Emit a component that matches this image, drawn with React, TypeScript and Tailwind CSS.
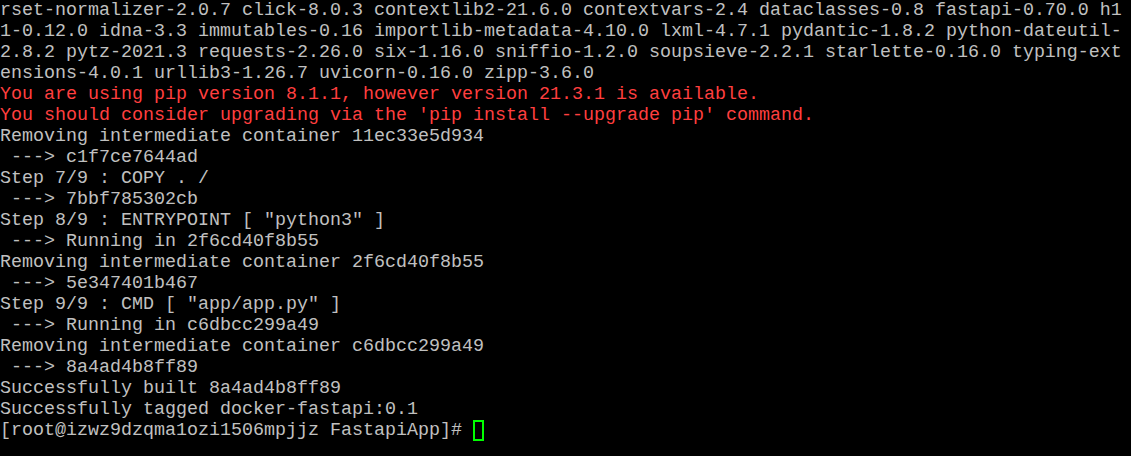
import React from 'react';

// Terminal output lines; red ones are the pip warnings
const lines: { text: string; red?: boolean }[] = [
  { text: "rset-normalizer-2.0.7 click-8.0.3 contextlib2-21.6.0 contextvars-2.4 dataclasses-0.8 fastapi-0.70.0 h1" },
  { text: "1-0.12.0 idna-3.3 immutables-0.16 importlib-metadata-4.10.0 lxml-4.7.1 pydantic-1.8.2 python-dateutil-" },
  { text: "2.8.2 pytz-2021.3 requests-2.26.0 six-1.16.0 sniffio-1.2.0 soupsieve-2.2.1 starlette-0.16.0 typing-ext" },
  { text: "ensions-4.0.1 urllib3-1.26.7 uvicorn-0.16.0 zipp-3.6.0" },
  { text: "You are using pip version 8.1.1, however version 21.3.1 is available.", red: true },
  { text: "You should consider upgrading via the 'pip install --upgrade pip' command.", red: true },
  { text: "Removing intermediate container 11ec33e5d934" },
  { text: " ---> c1f7ce7644ad" },
  { text: "Step 7/9 : COPY . /" },
  { text: " ---> 7bbf785302cb" },
  { text: 'Step 8/9 : ENTRYPOINT [ "python3" ]' },
  { text: " ---> Running in 2f6cd40f8b55" },
  { text: "Removing intermediate container 2f6cd40f8b55" },
  { text: " ---> 5e347401b467" },
  { text: 'Step 9/9 : CMD [ "app/app.py" ]' },
  { text: " ---> Running in c6dbcc299a49" },
  { text: "Removing intermediate container c6dbcc299a49" },
  { text: " ---> 8a4ad4b8ff89" },
  { text: "Successfully built 8a4ad4b8ff89" },
  { text: "Successfully tagged docker-fastapi:0.1" },
];

export default function App() {
  return (
    <div className="w-[1131px] h-[456px] overflow-hidden bg-black font-['Liberation_Mono',monospace] text-[18.33px] leading-[21px] text-[#c0c0c0] whitespace-pre">
      {lines.map((l, i) => (
        <div key={i} className={l.red ? 'text-[#ff3f3f]' : ''}>
          {l.text}
        </div>
      ))}
      <div className="flex items-center">
        <span>[root@izwz9dzqma1ozi1506mpjjz FastapiApp]# </span>
        <span className="inline-block w-[11px] h-[21px] border-2 border-[#00ff00]" />
      </div>
    </div>
  );
}
